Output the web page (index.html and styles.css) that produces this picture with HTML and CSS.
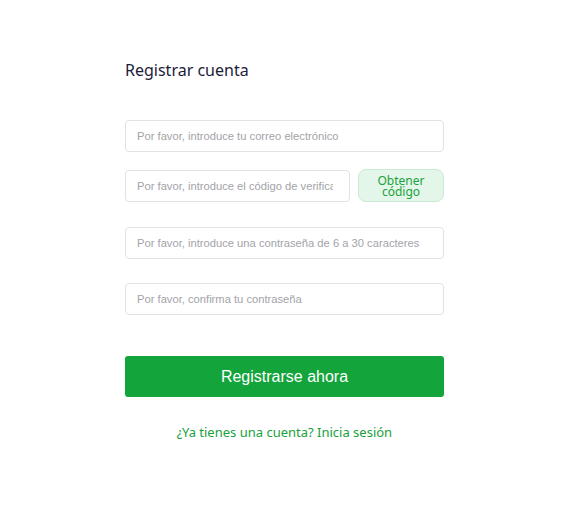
FILE: index.html
```html
<!DOCTYPE html>
<html lang="es">
<head>
<meta charset="utf-8">
<link rel="stylesheet" href="styles.css">
</head>
<body>
<div class="page">
  <form class="form">
    <h1 class="title">Registrar cuenta</h1>
    <input class="field field-first" type="text" placeholder="Por favor, introduce tu correo electrónico">
    <div class="code-row">
      <input class="field code-field" type="text" placeholder="Por favor, introduce el código de verificación">
      <button type="button" class="code-btn">Obtener código</button>
    </div>
    <input class="field field-pass" type="password" placeholder="Por favor, introduce una contraseña de 6 a 30 caracteres">
    <input class="field field-confirm" type="password" placeholder="Por favor, confirma tu contraseña">
    <button type="button" class="submit">Registrarse ahora</button>
    <a class="login" href="#">¿Ya tienes una cuenta? Inicia sesión</a>
  </form>
</div>
</body>
</html>
```

FILE: styles.css
```css
html, body {
  margin: 0;
  padding: 0;
  background: #ffffff;
}
.page {
  display: flex;
  padding: 58px 0 0 125px;
}
.form {
  width: 319px;
  display: flex;
  flex-direction: column;
}
.title {
  margin: 0;
  font-family: "Noto Sans", sans-serif;
  font-weight: 400;
  font-size: 16px;
  line-height: 24px;
  color: #1c1c3a;
}
.field {
  box-sizing: border-box;
  height: 32px;
  border: 1px solid #e2e2e6;
  border-radius: 4px;
  padding: 0 11px;
  font-family: "Liberation Sans", Arial, sans-serif;
  font-size: 11.2px;
  color: #333;
  outline: none;
  background: #fff;
}
.field::placeholder {
  color: #a3a3a8;
}
.field-first {
  margin-top: 38px;
}
.code-row {
  display: flex;
  gap: 8px;
  margin-top: 18px;
}
.code-field {
  width: 225px;
  flex: none;
  padding-right: 16px;
}
.code-btn {
  flex: 1;
  box-sizing: border-box;
  height: 33px;
  border: 1px solid #c8ecd2;
  border-radius: 8px;
  background: #e4f6e9;
  color: #1aa23d;
  font-family: "Noto Sans", sans-serif;
  font-size: 12px;
  line-height: 11px;
  padding: 0 10px;
  margin: -1px 0 0 0;
}
.field-pass {
  margin-top: 25px;
}
.field-confirm {
  margin-top: 24px;
}
.submit {
  margin-top: 41px;
  height: 41px;
  border: none;
  border-radius: 3px;
  background: #13a43b;
  color: #ffffff;
  font-family: "Liberation Sans", Arial, sans-serif;
  font-size: 16px;
}
.login {
  margin-top: 25px;
  align-self: center;
  font-family: "Noto Sans", sans-serif;
  font-size: 13px;
  line-height: 20px;
  color: #18a13c;
  text-decoration: none;
}
```
